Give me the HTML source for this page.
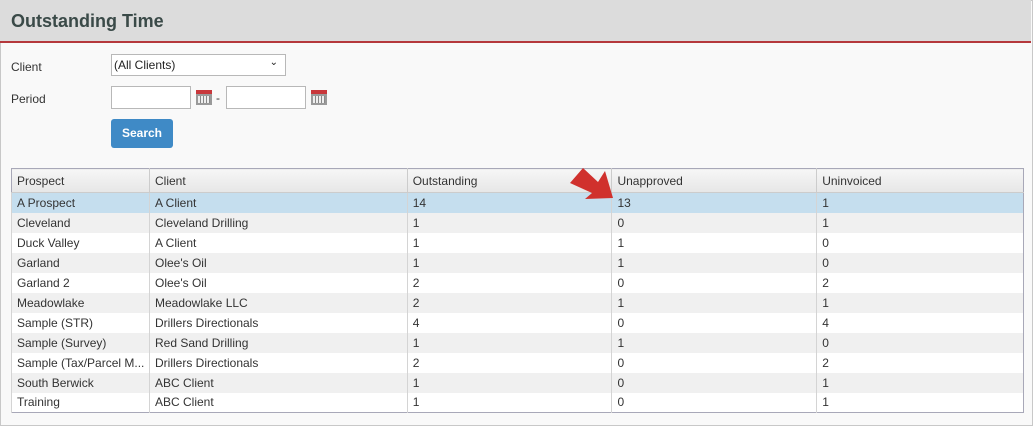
<!DOCTYPE html>
<html><head><meta charset="utf-8"><style>
*{margin:0;padding:0;box-sizing:border-box}
body{width:1033px;height:426px;background:#fff;font-family:"Liberation Sans",Arial,sans-serif;font-size:12px;color:#333;position:relative;overflow:hidden}
.frame{position:absolute;left:0;top:0;width:1033px;height:426px;border:1px solid #c8c8c8;background:#f9f9f9}
.hdr{position:absolute;left:0;top:0;width:1031px;height:43px;background:#dcdcdc;border-bottom:2px solid #b5383c}
.hdr h1{position:absolute;left:11px;top:11px;font-size:18px;font-weight:bold;color:#3a4a48}
.lbl{position:absolute;left:11px;font-size:12px;color:#333}
.inp{position:absolute;background:#fff;border:1px solid #b8b8b8}
.cal{position:absolute;width:16px;height:15px;background:#9a9a9a;border-top:4px solid #c8373b}
.cal:after{content:"";position:absolute;left:2px;top:2px;width:12px;height:7px;background:repeating-linear-gradient(90deg,#eee 0 2px,#888 2px 3px)}
.btn{position:absolute;left:111px;top:119px;width:62px;height:29px;background:#3f8ac6;border-radius:3px;color:#fff;font-weight:bold;font-size:12px;text-align:center;line-height:29px}
table{position:absolute;left:11px;top:168px;width:1013px;border-collapse:collapse;border:1px solid #a8a8b8}
td,th{height:20px;padding:0 0 0 5px;text-align:left;font-weight:normal;border-left:1px solid #d4d4d4;font-size:12px;color:#333;white-space:nowrap;overflow:hidden}
th{height:24px;background:linear-gradient(#f6f6f6,#e6e6e6);border-bottom:1px solid #ccc;border-left:1px solid #ccc}
tr.g td{background:#f0f0f0}
tr.w td{background:#fff}
tr.s td{background:#c5deee}
</style></head><body>
<div class="frame"></div>
<div class="hdr"><h1>Outstanding Time</h1></div>
<div class="lbl" style="top:60px">Client</div>
<div class="inp" style="left:111px;top:54px;width:175px;height:22px;padding:3px 2px;font-size:12px;color:#222">(All Clients)<span style="position:absolute;right:7px;top:2px;font-size:10px">&#8964;</span></div>
<div class="lbl" style="top:92px">Period</div>
<div class="inp" style="left:111px;top:86px;width:80px;height:23px"></div>
<div class="cal" style="left:196px;top:90px"></div>
<div style="position:absolute;left:216px;top:91px;font-size:12px">-</div>
<div class="inp" style="left:226px;top:86px;width:80px;height:23px"></div>
<div class="cal" style="left:311px;top:90px"></div>
<div class="btn">Search</div>
<table>
<colgroup><col style="width:138px"><col style="width:258px"><col style="width:205px"><col style="width:205px"><col style="width:207px"></colgroup>
<tr><th style="border-left:none">Prospect</th><th>Client</th><th>Outstanding</th><th>Unapproved</th><th>Uninvoiced</th></tr>
<tr class="s"><td>A Prospect</td><td>A Client</td><td>14</td><td>13</td><td>1</td></tr>
<tr class="g"><td>Cleveland</td><td>Cleveland Drilling</td><td>1</td><td>0</td><td>1</td></tr>
<tr class="w"><td>Duck Valley</td><td>A Client</td><td>1</td><td>1</td><td>0</td></tr>
<tr class="g"><td>Garland</td><td>Olee's Oil</td><td>1</td><td>1</td><td>0</td></tr>
<tr class="w"><td>Garland 2</td><td>Olee's Oil</td><td>2</td><td>0</td><td>2</td></tr>
<tr class="g"><td>Meadowlake</td><td>Meadowlake LLC</td><td>2</td><td>1</td><td>1</td></tr>
<tr class="w"><td>Sample (STR)</td><td>Drillers Directionals</td><td>4</td><td>0</td><td>4</td></tr>
<tr class="g"><td>Sample (Survey)</td><td>Red Sand Drilling</td><td>1</td><td>1</td><td>0</td></tr>
<tr class="w"><td>Sample (Tax/Parcel M...</td><td>Drillers Directionals</td><td>2</td><td>0</td><td>2</td></tr>
<tr class="g"><td>South Berwick</td><td>ABC Client</td><td>1</td><td>0</td><td>1</td></tr>
<tr class="w"><td>Training</td><td>ABC Client</td><td>1</td><td>0</td><td>1</td></tr>
</table>
<svg style="position:absolute;left:0;top:0" width="1033" height="426"><polygon points="570,183 583,168 598,182 605,171 613,198 585,199 592,193" fill="#d0312d"/></svg>
</body></html>
